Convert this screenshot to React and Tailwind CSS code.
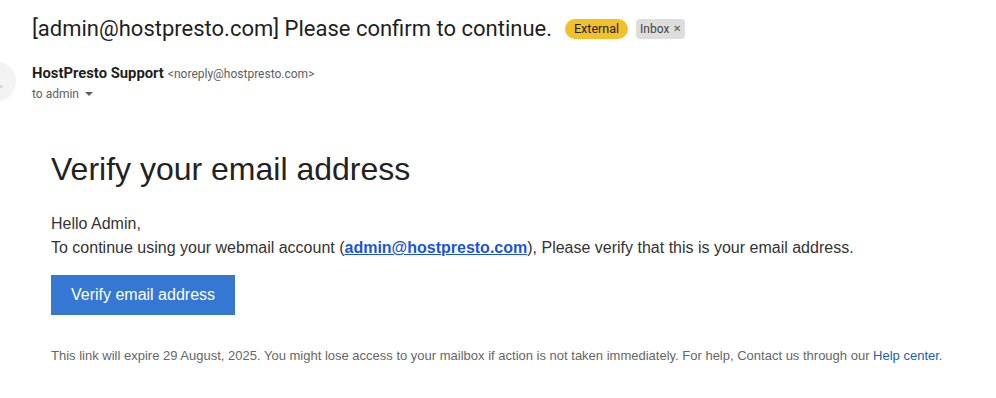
export default function App() {
  return (
    <div className="w-[996px] h-[398px] bg-white overflow-hidden relative">
      <div className="absolute left-[-25px] top-[61px] w-[41px] h-[41px] rounded-full bg-[#f3f3f3]">
        <div className="absolute left-[24px] top-[24px] w-[4px] h-[3px] rounded-full bg-[#d8d8d8]" />
      </div>
      <div className="pl-[32px] pt-[15px] flex items-center font-['Roboto',sans-serif]">
        <span className="text-[22px] text-[#1f1f1f] leading-[28px]">[admin@hostpresto.com] Please confirm to continue.</span>
        <span className="ml-[13px] h-[20px] px-[9px] rounded-full bg-[#f2bf2d] text-[12.5px] leading-[20px] text-[#222]">External</span>
        <span className="ml-[8px] h-[20px] px-[4px] rounded-[4px] bg-[#dddddd] text-[12px] leading-[20px] text-[#444] flex items-center gap-[4px]">
          Inbox<span className="text-[10px] text-[#555]">✕</span>
        </span>
      </div>
      <div className="pl-[32px] pt-[19px] font-['Roboto',sans-serif]">
        <div className="flex items-baseline">
          <span className="text-[14.8px] font-bold text-[#1f1f1f]">HostPresto Support</span>
          <span className="ml-[4px] text-[12px] text-[#5e5e5e]">&lt;noreply@hostpresto.com&gt;</span>
        </div>
        <div className="flex items-center mt-[1px] text-[12px] text-[#5e5e5e]">
          to admin
          <svg width="10" height="6" viewBox="0 0 10 6" className="ml-[5px]">
            <path d="M1 1 L5 5 L9 1 Z" fill="#5e5e5e" />
          </svg>
        </div>
      </div>
      <div className="pl-[51px] pt-[46px] font-['Liberation_Sans',Arial,sans-serif]">
        <h1 className="text-[32px] leading-[40px] text-[#222]">Verify your email address</h1>
        <div className="mt-[23px] text-[16px] leading-[24px] text-[#333]">
          <div>Hello Admin,</div>
          <div>
            To continue using your webmail account (
            <a className="font-bold text-[#1a55d8] underline">admin@hostpresto.com</a>
            ), Please verify that this is your email address.
          </div>
        </div>
        <div className="mt-[15px] w-[184px] h-[40px] bg-[#3478d4] text-white text-[16px] flex items-center justify-center">
          Verify email address
        </div>
        <div className="mt-[31px] text-[13px] text-[#666]">
          This link will expire 29 August, 2025. You might lose access to your mailbox if action is not taken immediately. For help, Contact us through our <span className="text-[#1a5fb4]">Help center.</span>
        </div>
      </div>
    </div>
  );
}
